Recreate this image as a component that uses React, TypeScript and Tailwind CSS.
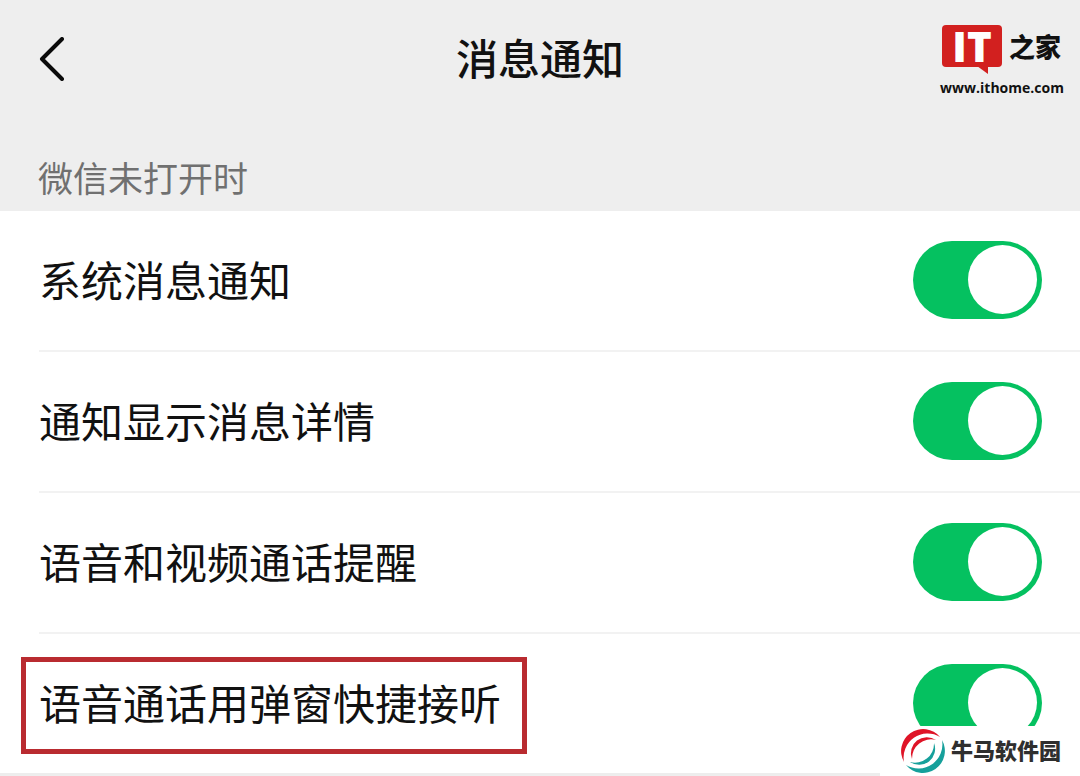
import { useId, useState } from "react";

const settings = [
  { label: "系统消息通知" },
  { label: "通知显示消息详情" },
  { label: "语音和视频通话提醒" },
  { label: "语音通话用弹窗快捷接听", highlighted: true },
];

function SettingRow({ label, highlighted }: { label: string; highlighted?: boolean }) {
  const id = useId();
  const [on, setOn] = useState(true);

  return (
    <li className="group flex items-center pl-[39px] last:pl-0">
      <div className="flex h-[141px] flex-1 items-center justify-between border-b-2 border-[#f2f2f2] pr-[38px] pb-[2px] group-last:border-[#ededed] group-last:pl-[21px]">
        <label
          htmlFor={id}
          className={
            highlighted
              ? "mt-[6px] border-[5px] border-[#b92b30] pt-[8px] pr-[21px] pb-[15px] pl-[13px] text-[42px] leading-[64px]"
              : "pb-[2px] text-[42px] leading-[64px]"
          }
        >
          {label}
        </label>
        <input
          id={id}
          type="checkbox"
          role="switch"
          checked={on}
          onChange={(e) => setOn(e.target.checked)}
          className="flex h-[78px] w-[129px] shrink-0 appearance-none items-center rounded-full bg-[#c8c8c8] px-[5px] before:size-[69px] before:rounded-full before:bg-white checked:justify-end checked:bg-[#05c160]"
        />
      </div>
    </li>
  );
}

function SourceLogo() {
  return (
    <a href="#" className="absolute top-[25px] right-[18px] flex w-[120px] flex-col items-center">
      <span className="flex h-[49px] w-full items-start">
        <span className="relative flex h-[42px] w-[60px] items-center justify-center rounded-sm bg-[#d2201f]">
          <span className="font-['Open_Sans',sans-serif] text-[42px] leading-[42px] font-extrabold text-white">IT</span>
          <svg viewBox="0 0 12 9" className="absolute top-[41px] left-[35px] h-[9px] w-[12px]" aria-hidden="true">
            <path d="M0 0H11V8Z" fill="#d2201f" />
          </svg>
        </span>
        <span className="ml-[7px] text-[26px] leading-[42px] font-black whitespace-nowrap">之家</span>
      </span>
      <span className="font-['Open_Sans',sans-serif] text-[14px] leading-[28px] font-bold">www.ithome.com</span>
    </a>
  );
}

function Watermark() {
  return (
    <div className="absolute right-0 bottom-0 flex h-[50px] w-[200px] items-center bg-white pl-[20px]">
      <svg viewBox="0 0 46 46" className="size-[46px]" aria-hidden="true">
        <g fill="#df1427">
          <path d="M4 34A22 22 0 0 1 40 9A24 24 0 0 0 4 34Z" />
          <path d="M12 31A16 16 0 0 1 36 12A19 19 0 0 0 12 31Z" />
        </g>
        <g fill="#16a09b" transform="rotate(180 23 23)">
          <path d="M4 34A22 22 0 0 1 40 9A24 24 0 0 0 4 34Z" />
          <path d="M12 31A16 16 0 0 1 36 12A19 19 0 0 0 12 31Z" />
        </g>
      </svg>
      <span className="ml-[5px] pb-[4px] text-[22px] leading-[32px] font-black text-[#2f2f2f]">牛马软件园</span>
    </div>
  );
}

export default function App() {
  return (
    <div className="relative h-screen overflow-hidden bg-[#eee] font-['Noto_Sans_CJK_SC',sans-serif] text-[#111]">
      <header className="grid h-[118px] grid-cols-3 items-center px-[38px]">
        <button type="button" aria-label="返回" className="h-[44px] w-[28px]">
          <svg viewBox="0 0 28 44" fill="none" className="h-[44px] w-[28px]" aria-hidden="true">
            <path d="M24 2L4 22L24 42" stroke="#0a0a0a" strokeWidth="4" strokeLinecap="round" strokeLinejoin="round" />
          </svg>
        </button>
        <h1 className="pb-[4px] text-center text-[42px] leading-[64px] font-medium">消息通知</h1>
      </header>
      <SourceLogo />

      <h2 className="flex h-[93px] items-end pb-[8px] pl-[38px] text-[35px] leading-[52px] text-[#707070]">
        微信未打开时
      </h2>

      <ul className="bg-white">
        {settings.map((s) => (
          <SettingRow key={s.label} {...s} />
        ))}
      </ul>

      <Watermark />
    </div>
  );
}
